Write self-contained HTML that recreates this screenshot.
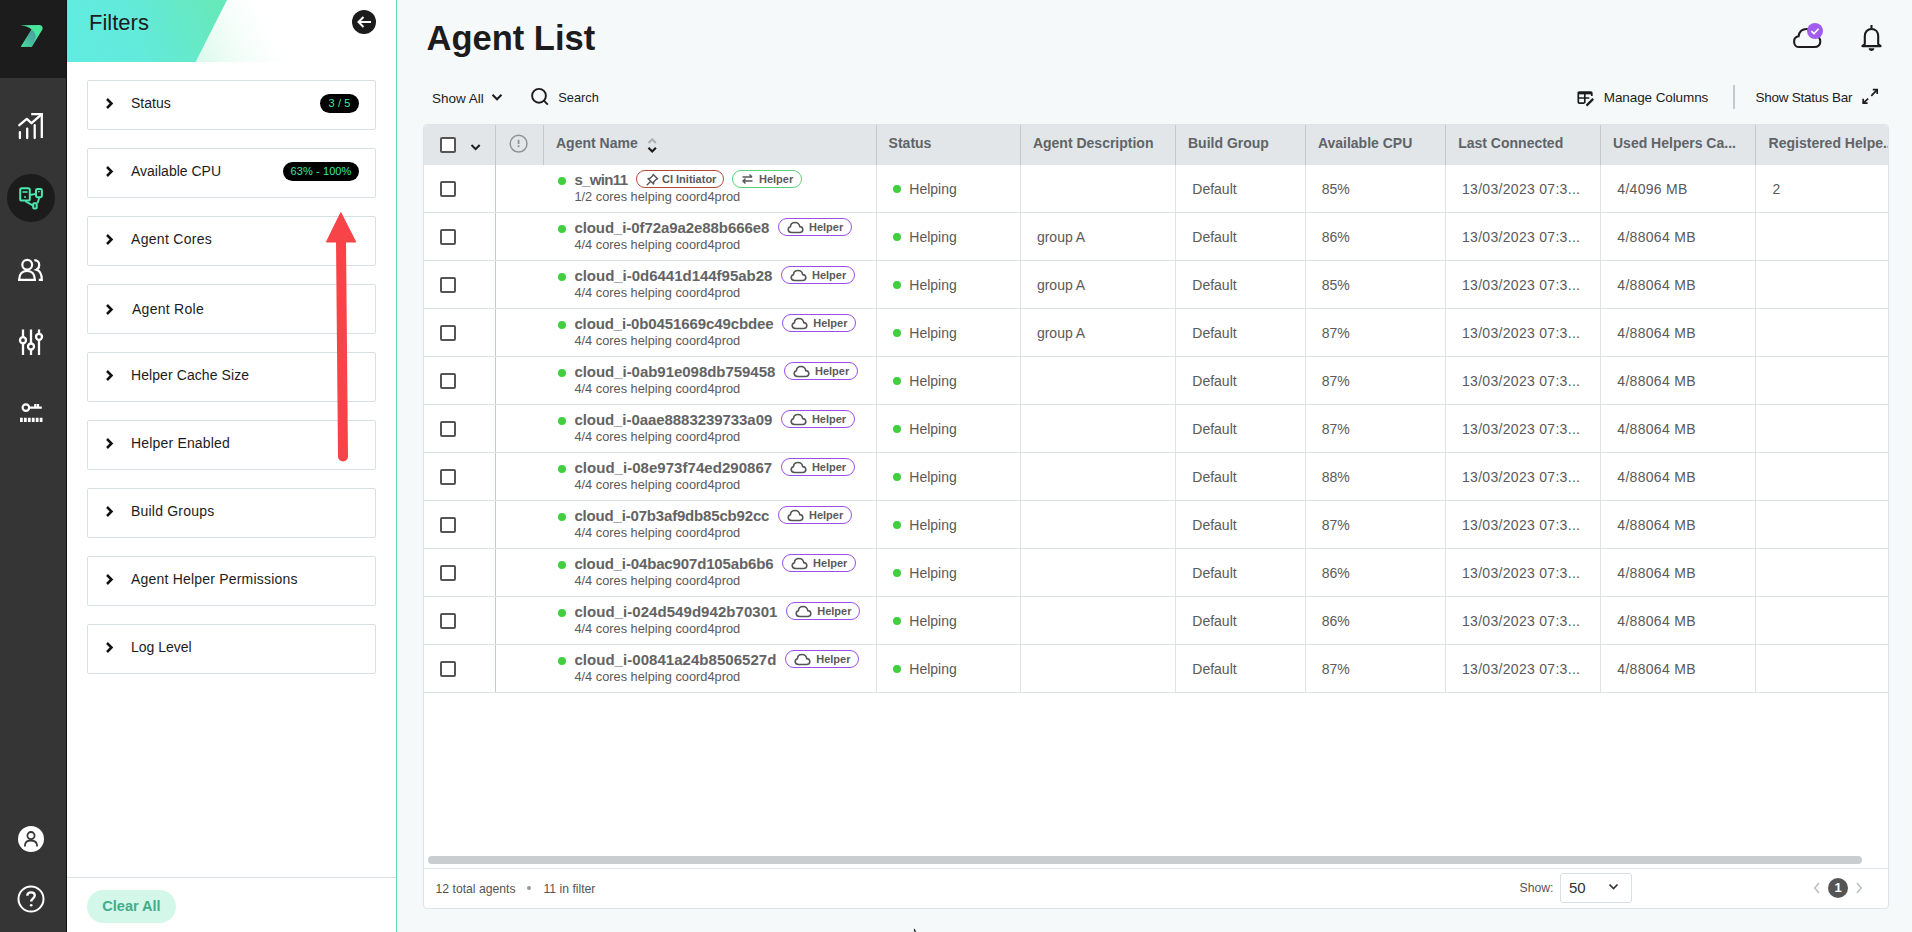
<!DOCTYPE html>
<html><head><meta charset="utf-8">
<style>
*{box-sizing:border-box;margin:0;padding:0}
html,body{width:1912px;height:932px;overflow:hidden}
body{font-family:"Liberation Sans",sans-serif;background:#f5f9fa;position:relative;color:#1c1c1c}
.abs{position:absolute}
svg{display:block}
#side{left:0;top:0;width:67px;height:932px;background:#353535;border-right:1px solid #121212}
#side .top{left:0;top:0;width:66px;height:78px;background:#1c1c1c}
#fp{left:67px;top:0;width:330px;height:932px;background:#fff;border-right:1px solid #62dfa9}
.fbox{position:absolute;left:20px;width:289px;height:50px;border:1px solid #d9e0e4;border-radius:2px;background:#fff}
.fbox .chev{position:absolute;left:17px;top:16px}
.fbox .lbl{position:absolute;left:43px;top:13px;font-size:14px;color:#1c1c1c;line-height:18px}
.badge{position:absolute;right:16px;top:13px;height:19px;border-radius:10px;background:#000;color:#3ee6a4;font-size:11px;line-height:19px;text-align:center;letter-spacing:0.1px}
.tb{top:89px;font-size:13.5px;line-height:18px;color:#1c1c1c}
#tbl{left:423px;top:124px;width:1466px;height:785px;background:#fff;border:1px solid #dde3e6;border-radius:4px;overflow:hidden}
.thead{left:0;top:0;width:1464px;height:40px;background:#e2e6e9}
.hdiv{top:0;width:1px;height:40px;background:#c2c9cd}
.bdiv{top:40px;width:1px;height:528px;background:#dfe3e6}
.hlbl{top:9.5px;font-size:14px;font-weight:bold;line-height:16px;color:#606467;white-space:nowrap}
.cb{width:16px;height:16px;border:2px solid #555;border-radius:2px;background:#fff}
.row{left:0;width:1464px;height:48px;border-bottom:1px solid #dde2e5}
.gdot{width:8px;height:8px;border-radius:50%;background:#3fcf3f}
.nm{top:5.8px;font-size:15px;font-weight:bold;line-height:18px;color:#636363;white-space:nowrap}
.sub{top:24.4px;font-size:12.8px;line-height:16px;color:#5a5a5a;white-space:nowrap}
.bdg{top:5px;height:18px;border:1.5px solid;border-radius:9px;background:#fff}
.bdg .bi{position:absolute;left:8px;top:1.5px}
.bdg span{position:absolute;top:1.5px;font-size:11px;font-weight:bold;line-height:13px;color:#5a5a5a;white-space:nowrap}
.cell{top:14.8px;font-size:14px;line-height:18px;color:#5a5a5a;white-space:nowrap}
.num{letter-spacing:0.3px}
.ft{top:756px;font-size:12.2px;line-height:16px;color:#555;white-space:nowrap}

</style></head><body>
<div id="side" class="abs">
  <div class="top abs"></div>
  <svg class="abs" style="left:0;top:0" width="66" height="78" viewBox="0 0 66 78">
    <defs>
      <linearGradient id="lg1" x1="0" y1="1" x2="1" y2="0">
        <stop offset="0" stop-color="#45e6a0"/><stop offset="0.55" stop-color="#4aa8a0"/><stop offset="1" stop-color="#4a8fa5"/>
      </linearGradient>
    </defs>
    <path d="M20.2 25.2 L39.5 24.9 Q43.5 25.5 42.4 29.5 L31.8 46.8 L20.9 46.8 L31.6 29.6 Q27 25.6 20.2 25.2 Z" fill="#48e59c"/>
    <path d="M31.6 29.6 Q36 33 35.8 37.6 L31.8 46.8 L20.9 46.8 Z" fill="url(#lg1)" opacity="0.85"/>
  </svg>
  <!-- chart icon -->
  <svg class="abs" style="left:17px;top:111px" width="28" height="29" viewBox="0 0 28 29" fill="none" stroke="#fff" stroke-width="2.3">
    <path d="M2.9 27 V21.2 M10.2 27 V17.6 M17.7 27 V14.2" stroke-linecap="round"/>
    <path d="M2.3 14.2 L9.8 7.9 L14.5 12.2 L24 3.8" stroke-linecap="round" stroke-linejoin="round"/>
    <path d="M14.2 3.2 H24.8 V27" stroke-linejoin="miter"/>
  </svg>
  <!-- active circle -->
  <div class="abs" style="left:7px;top:174px;width:48px;height:48px;border-radius:50%;background:#1c1c1c"></div>
  <svg class="abs" style="left:17px;top:186px" width="28" height="26" viewBox="0 0 28 26" fill="none" stroke="#4ce8b0" stroke-width="2" stroke-linejoin="round">
    <rect x="3.2" y="2.2" width="9.6" height="12.4" rx="1.6"/>
    <rect x="19" y="3" width="5.9" height="8.2" rx="1.4"/>
    <rect x="16.2" y="17.3" width="3.5" height="5.2" rx="1"/>
    <path d="M5.4 6 H10.6" stroke-width="1.6"/>
    <circle cx="8" cy="11" r="1" fill="#4ce8b0" stroke="none"/>
    <circle cx="21.9" cy="5.6" r="0.9" fill="#4ce8b0" stroke="none"/>
    <path d="M12.8 9 L19 7.9 M8.3 15.2 L16.2 19.6 M22.4 11.2 L20.5 17.3" stroke-width="1.8"/>
  </svg>
  <!-- users icon -->
  <svg class="abs" style="left:16px;top:257px" width="30" height="26" viewBox="0 0 30 26" fill="none" stroke="#fff" stroke-width="2.2">
    <circle cx="11.2" cy="7.8" r="4.9"/>
    <path d="M3.1 22.8 C3.1 16.8 6.5 13.8 11 13.8 C15.5 13.8 18.9 16.8 18.9 22.8 Z"/>
    <path d="M18.3 3.1 C21.5 3.1 23.2 5.3 23.2 7.8 C23.2 10.3 21.8 12.2 20.5 12.8 C24 13.8 25.8 17.5 25.8 22.8 H22.8"/>
  </svg>
  <!-- sliders -->
  <svg class="abs" style="left:17px;top:327px" width="28" height="30" viewBox="0 0 28 30" fill="none" stroke="#fff" stroke-width="2.3">
    <path d="M6 2.4 V10.2 M6 16.2 V28 M14 2.4 V16.5 M14 22.5 V28 M22 2.4 V6.8 M22 12.8 V28"/>
    <circle cx="6" cy="13.2" r="3"/><circle cx="14" cy="19.5" r="3"/><circle cx="22" cy="9.8" r="3"/>
  </svg>
  <!-- key -->
  <svg class="abs" style="left:18px;top:401px" width="28" height="24" viewBox="0 0 28 24" fill="none" stroke="#fff" stroke-width="2.2">
    <circle cx="7.9" cy="6.6" r="3.3"/>
    <path d="M11.2 6.6 H23.8 M17.3 6.6 V3 M20 6.6 V3" />
    <path d="M2 18.8 H24.6" stroke-dasharray="2.8 1.14" stroke-width="4.2"/>
  </svg>
  <!-- user -->
  <div class="abs" style="left:18px;top:826px;width:26px;height:26px;border-radius:50%;background:#fff"></div>
  <svg class="abs" style="left:18px;top:826px" width="26" height="26" viewBox="0 0 26 26" fill="none" stroke="#353535" stroke-width="1.8">
    <circle cx="13" cy="9.6" r="3.6"/>
    <path d="M6.8 20.5 C6.8 15.8 9.3 14.5 13 14.5 C16.7 14.5 19.2 15.8 19.2 20.5"/>
  </svg>
  <!-- help -->
  <svg class="abs" style="left:17px;top:885px" width="28" height="28" viewBox="0 0 28 28" fill="none" stroke="#fff" stroke-width="2">
    <circle cx="14" cy="14" r="12.5"/>
    <path d="M10.3 10.8 C10.3 8.5 12 7.3 14 7.3 C16.2 7.3 17.8 8.6 17.8 10.6 C17.8 13.2 14.2 13.5 14.2 16.5" stroke-width="2.3"/>
    <circle cx="14.2" cy="20.3" r="1.3" fill="#fff" stroke="none"/>
  </svg>
</div>

<div id="fp" class="abs">
  <svg class="abs" style="left:0;top:0" width="329" height="62" viewBox="0 0 329 62">
    <defs>
      <linearGradient id="hg1" x1="0" y1="62" x2="160" y2="0" gradientUnits="userSpaceOnUse">
        <stop offset="0" stop-color="#60ece2"/><stop offset="0.45" stop-color="#62eada"/><stop offset="1" stop-color="#68e8b6"/>
      </linearGradient>
      <linearGradient id="hg2" x1="128" y1="62" x2="200" y2="25" gradientUnits="userSpaceOnUse">
        <stop offset="0" stop-color="#d8faec"/><stop offset="0.45" stop-color="#effdf7"/><stop offset="1" stop-color="#ffffff"/>
      </linearGradient>
    </defs>
    <polygon points="128,62 160,0 329,0 329,62" fill="url(#hg2)"/>
    <polygon points="0,0 160,0 128.6,62 0,62" fill="url(#hg1)"/>
  </svg>
  <div class="abs" style="left:22px;top:10px;font-size:22px;line-height:26px;color:#1c1c1c">Filters</div>
  <div class="abs" style="left:285px;top:10px;width:24px;height:24px;border-radius:50%;background:#1c1c1c"></div>
  <svg class="abs" style="left:285px;top:10px" width="24" height="24" viewBox="0 0 24 24" fill="none" stroke="#fff" stroke-width="2">
    <path d="M19 12 H6.5 M11.5 7 L6.5 12 L11.5 17" stroke-linejoin="miter"/>
  </svg>
  <div class="fbox" style="top:80px"><svg class="chev" style="" width="9" height="13" viewBox="0 0 9 13"><path d="M2 2 L6.5 6.5 L2 11" fill="none" stroke="#111" stroke-width="2.5"/></svg><span class="lbl" style="letter-spacing:0px">Status</span><span class="badge" style="width:39px">3 / 5</span></div>
  <div class="fbox" style="top:148px"><svg class="chev" style="" width="9" height="13" viewBox="0 0 9 13"><path d="M2 2 L6.5 6.5 L2 11" fill="none" stroke="#111" stroke-width="2.5"/></svg><span class="lbl" style="letter-spacing:0px">Available CPU</span><span class="badge" style="width:76px">63% - 100%</span></div>
  <div class="fbox" style="top:216px"><svg class="chev" style="" width="9" height="13" viewBox="0 0 9 13"><path d="M2 2 L6.5 6.5 L2 11" fill="none" stroke="#111" stroke-width="2.5"/></svg><span class="lbl" style="letter-spacing:0.3px">Agent Cores</span></div>
  <div class="fbox" style="top:284px"><svg class="chev" style="top:17.6px" width="9" height="13" viewBox="0 0 9 13"><path d="M2 2 L6.5 6.5 L2 11" fill="none" stroke="#111" stroke-width="2.5"/></svg><span class="lbl" style="letter-spacing:0.27px;top:14.8px;left:44px">Agent Role</span></div>
  <div class="fbox" style="top:352px"><svg class="chev" style="" width="9" height="13" viewBox="0 0 9 13"><path d="M2 2 L6.5 6.5 L2 11" fill="none" stroke="#111" stroke-width="2.5"/></svg><span class="lbl" style="letter-spacing:0.08px">Helper Cache Size</span></div>
  <div class="fbox" style="top:420px"><svg class="chev" style="" width="9" height="13" viewBox="0 0 9 13"><path d="M2 2 L6.5 6.5 L2 11" fill="none" stroke="#111" stroke-width="2.5"/></svg><span class="lbl" style="letter-spacing:0.18px">Helper Enabled</span></div>
  <div class="fbox" style="top:488px"><svg class="chev" style="" width="9" height="13" viewBox="0 0 9 13"><path d="M2 2 L6.5 6.5 L2 11" fill="none" stroke="#111" stroke-width="2.5"/></svg><span class="lbl" style="letter-spacing:0.2px">Build Groups</span></div>
  <div class="fbox" style="top:556px"><svg class="chev" style="" width="9" height="13" viewBox="0 0 9 13"><path d="M2 2 L6.5 6.5 L2 11" fill="none" stroke="#111" stroke-width="2.5"/></svg><span class="lbl" style="letter-spacing:0.2px">Agent Helper Permissions</span></div>
  <div class="fbox" style="top:624px"><svg class="chev" style="" width="9" height="13" viewBox="0 0 9 13"><path d="M2 2 L6.5 6.5 L2 11" fill="none" stroke="#111" stroke-width="2.5"/></svg><span class="lbl" style="letter-spacing:0px">Log Level</span></div>
  <div class="abs" style="left:0;top:877px;width:329px;height:1px;background:#d9e0e4"></div>
  <div class="abs" style="left:20px;top:890px;width:89px;height:33px;border-radius:17px;background:#d3f7e9;color:#41ad89;font-size:14.5px;font-weight:bold;line-height:33px;text-align:center">Clear All</div>
</div>

<div class="abs" style="left:426.5px;top:18px;font-size:34.5px;font-weight:bold;line-height:40px;letter-spacing:0px;color:#1c1c1c">Agent List</div>
<!-- cloud -->
<svg class="abs" style="left:1790px;top:20px" width="40" height="32" viewBox="0 0 40 32" fill="none">
  <path d="M8.3 27 H24.3 C28 27 30.3 24.8 30.3 21.5 C30.3 18.4 28 16 24.8 15.8 C24 11.2 20.6 9 16.8 9 C12.2 9 9.2 12 8.6 16.2 C5.8 16.6 4.1 18.8 4.1 21.5 C4.1 24.6 6 27 8.3 27 Z" stroke="#1c1c1c" stroke-width="2.1"/>
  <circle cx="25" cy="11" r="8" fill="#a35cf0"/>
  <path d="M21.3 11.2 L24 13.6 L28.6 8.8" stroke="#fff" stroke-width="1.6"/>
</svg>
<!-- bell -->
<svg class="abs" style="left:1858px;top:23px" width="27" height="31" viewBox="0 0 27 31" fill="none" stroke="#1c1c1c" stroke-width="2.1">
  <path d="M13.5 2 V5.5"/>
  <path d="M6.8 20.9 V13.2 C6.8 8.9 9.6 6 13.5 6 C17.4 6 20.2 8.9 20.2 13.2 V20.9 L22.6 23.1 H4.4 L6.8 20.9 Z" stroke-linejoin="round"/>
  <path d="M10.6 25.3 H16.4 C16.2 27.1 15 28.1 13.5 28.1 C12 28.1 10.8 27.1 10.6 25.3 Z" fill="#1c1c1c" stroke="none"/>
</svg>
<!-- toolbar -->
<div class="abs tb" style="left:432px;top:90px">Show All</div>
<svg class="abs" style="left:491px;top:93px" width="12" height="9" viewBox="0 0 12 9"><path d="M1.5 1.8 L6 6.3 L10.5 1.8" fill="none" stroke="#1c1c1c" stroke-width="2"/></svg>
<svg class="abs" style="left:530px;top:87px" width="20" height="20" viewBox="0 0 20 20" fill="none" stroke="#1c1c1c" stroke-width="1.9"><circle cx="9" cy="8.8" r="6.9"/><path d="M13.9 13.7 L17.8 17.6"/></svg>
<div class="abs tb" style="left:558.3px;font-size:12.8px;top:89px">Search</div>
<svg class="abs" style="left:1576px;top:89px" width="20" height="19" viewBox="0 0 20 19" fill="none" stroke="#1c1c1c" stroke-width="1.7">
  <path d="M15.8 7 V4.1 C15.8 3.5 15.5 3.1 14.8 3.1 H3.3 C2.7 3.1 2.3 3.5 2.3 4.1 V13.1 C2.3 13.7 2.7 14.1 3.3 14.1 H8.6"/>
  <path d="M2.5 4.2 H15.6" stroke-width="2.3"/>
  <path d="M2.3 9 H13.3 M8.8 3.1 V14.1"/>
  <path d="M10.5 16.6 L17.2 9.9" stroke-width="2.2"/>
</svg>
<div class="abs tb" style="left:1603.8px;letter-spacing:-0.1px">Manage Columns</div>
<div class="abs" style="left:1733px;top:85px;width:2px;height:24px;background:#c4c9cc"></div>
<div class="abs tb" style="left:1755.4px;letter-spacing:-0.25px">Show Status Bar</div>
<svg class="abs" style="left:1860px;top:87px" width="20" height="20" viewBox="0 0 20 20" fill="none" stroke="#1c1c1c" stroke-width="1.7">
  <path d="M17.2 2.6 L11.3 8.8 M8.2 11.6 L3.2 16.2"/>
  <path d="M12.8 2.6 H17.2 V7 M3.2 11.8 V16.2 H7.6"/>
</svg>
<!-- red arrow -->
<svg class="abs" style="left:320px;top:205px" width="45" height="265" viewBox="0 0 45 265">
  <path d="M21 35 L23 251.5" stroke="#f84348" stroke-width="10" stroke-linecap="round"/>
  <polygon points="20.8,7.6 6.4,37 35.8,37" fill="#f84348" stroke="#f84348" stroke-width="1" stroke-linejoin="round"/>
</svg>
<!-- cursor -->
<svg class="abs" style="left:912px;top:926px" width="10" height="6" viewBox="0 0 10 6"><path d="M1.5 1 L1.5 6 L5 6 Z" fill="#111" stroke="#fff" stroke-width="0.8"/></svg>

<div id="tbl" class="abs">
<div class="thead abs"></div>
<div class="abs hdiv" style="left:71px"></div>
<div class="abs hdiv" style="left:119px"></div>
<div class="abs hdiv" style="left:452px"></div>
<div class="abs hdiv" style="left:596px"></div>
<div class="abs hdiv" style="left:751px"></div>
<div class="abs hdiv" style="left:881px"></div>
<div class="abs hdiv" style="left:1021px"></div>
<div class="abs hdiv" style="left:1176px"></div>
<div class="abs hdiv" style="left:1331px"></div>
<div class="abs hlbl" style="left:132.0px">Agent Name</div>
<div class="abs hlbl" style="left:464.6px">Status</div>
<div class="abs hlbl" style="left:608.9px">Agent Description</div>
<div class="abs hlbl" style="left:764.0px">Build Group</div>
<div class="abs hlbl" style="left:893.9px">Available CPU</div>
<div class="abs hlbl" style="left:1034.2px">Last Connected</div>
<div class="abs hlbl" style="left:1189.0px">Used Helpers Ca...</div>
<div class="abs hlbl" style="left:1344.6px">Registered Helpe..</div>
<div class="abs cb" style="left:16px;top:12px"></div>
<svg class="abs" style="left:46px;top:17.5px" width="12" height="9" viewBox="0 0 12 9"><path d="M1.5 2 L5.6 6.1 L9.7 2" fill="none" stroke="#1c1c1c" stroke-width="2"/></svg>
<svg class="abs" style="left:85px;top:9px" width="20" height="20" viewBox="0 0 20 20" fill="none" stroke="#8e9397" stroke-width="1.5"><circle cx="9.6" cy="9.7" r="8.4"/><rect x="8.7" y="5.8" width="1.8" height="4.2" fill="#8e9397" stroke="none"/><rect x="8.7" y="11.3" width="1.8" height="1.8" fill="#8e9397" stroke="none"/></svg>
<svg class="abs" style="left:222.5px;top:12px" width="11" height="18" viewBox="0 0 11 18" fill="none" stroke-width="1.9"><path d="M1.5 6 L5.2 2.3 L8.9 6" stroke="#a8adb0"/><path d="M1.5 10.8 L5.2 14.5 L8.9 10.8" stroke="#1c1c1c" stroke-width="2.2"/></svg>
<div class="abs bdiv" style="left:71px;background:#c3c9cd"></div>
<div class="abs bdiv" style="left:452px;"></div>
<div class="abs bdiv" style="left:596px;"></div>
<div class="abs bdiv" style="left:751px;"></div>
<div class="abs bdiv" style="left:881px;"></div>
<div class="abs bdiv" style="left:1021px;"></div>
<div class="abs bdiv" style="left:1176px;"></div>
<div class="abs bdiv" style="left:1331px;"></div>
<div class="row abs" style="top:40px"><div class="abs cb" style="left:16px;top:16px"></div><div class="abs gdot" style="left:133.8px;top:12px"></div><div class="abs nm" style="left:150.4px;letter-spacing:-0.657px">s_win11</div><div class="abs sub" style="left:150.4px">1/2 cores helping coord4prod</div><div class="abs bdg" style="left:212.0px;width:88px;border-color:#b5493a"><svg class="bi" width="14" height="14" viewBox="0 0 14 14" fill="none" stroke="#555" stroke-width="1.4" stroke-linejoin="round"><path d="M8.2 1.5 L12.5 5.8 L11.3 6.3 L8.8 8.8 L8.6 11 L3 5.4 L5.2 5.2 L7.7 2.7 Z M5.5 8.5 L1.8 12.2"/></svg><span style="left:25px">CI Initiator</span></div><div class="abs bdg" style="left:308.0px;width:70px;border-color:#55d47a"><svg class="bi" width="13" height="12" viewBox="0 0 13 12" fill="none" stroke="#555" stroke-width="1.4"><path d="M1.5 4 H11 M8.5 1.5 L11 4 M11.5 8 H2 M4.5 5.5 L2 8 L4.5 10.5"/></svg><span style="left:26px">Helper</span></div><div class="abs gdot" style="left:469px;top:20px"></div><div class="abs cell" style="left:485.3px">Helping</div><div class="abs cell" style="left:768.3px">Default</div><div class="abs cell" style="left:897.8px">85%</div><div class="abs cell num" style="left:1038px">13/03/2023 07:3...</div><div class="abs cell num" style="left:1193.3px">4/4096 MB</div><div class="abs cell" style="left:1348.6px">2</div></div>
<div class="row abs" style="top:88px"><div class="abs cb" style="left:16px;top:16px"></div><div class="abs gdot" style="left:133.8px;top:12px"></div><div class="abs nm" style="left:150.4px;letter-spacing:-0.076px">cloud_i-0f72a9a2e88b666e8</div><div class="abs sub" style="left:150.4px">4/4 cores helping coord4prod</div><div class="abs bdg" style="left:354.0px;width:74px;border-color:#9a4ee8"><svg class="bi" width="17" height="13" viewBox="0 0 17 13" fill="none" stroke="#555" stroke-width="1.6"><path d="M4.5 11.5 H12.5 C14.5 11.5 15.8 10.2 15.8 8.5 C15.8 6.8 14.5 5.6 12.8 5.6 C12.3 3 10.3 1.5 8 1.5 C5.5 1.5 3.6 3.3 3.4 5.7 C2 6 1.2 7.2 1.2 8.6 C1.2 10.3 2.6 11.5 4.5 11.5 Z"/></svg><span style="left:30px">Helper</span></div><div class="abs gdot" style="left:469px;top:20px"></div><div class="abs cell" style="left:485.3px">Helping</div><div class="abs cell" style="left:612.9px">group A</div><div class="abs cell" style="left:768.3px">Default</div><div class="abs cell" style="left:897.8px">86%</div><div class="abs cell num" style="left:1038px">13/03/2023 07:3...</div><div class="abs cell num" style="left:1193.3px">4/88064 MB</div></div>
<div class="row abs" style="top:136px"><div class="abs cb" style="left:16px;top:16px"></div><div class="abs gdot" style="left:133.8px;top:12px"></div><div class="abs nm" style="left:150.4px;letter-spacing:-0.020px">cloud_i-0d6441d144f95ab28</div><div class="abs sub" style="left:150.4px">4/4 cores helping coord4prod</div><div class="abs bdg" style="left:357.0px;width:74px;border-color:#9a4ee8"><svg class="bi" width="17" height="13" viewBox="0 0 17 13" fill="none" stroke="#555" stroke-width="1.6"><path d="M4.5 11.5 H12.5 C14.5 11.5 15.8 10.2 15.8 8.5 C15.8 6.8 14.5 5.6 12.8 5.6 C12.3 3 10.3 1.5 8 1.5 C5.5 1.5 3.6 3.3 3.4 5.7 C2 6 1.2 7.2 1.2 8.6 C1.2 10.3 2.6 11.5 4.5 11.5 Z"/></svg><span style="left:30px">Helper</span></div><div class="abs gdot" style="left:469px;top:20px"></div><div class="abs cell" style="left:485.3px">Helping</div><div class="abs cell" style="left:612.9px">group A</div><div class="abs cell" style="left:768.3px">Default</div><div class="abs cell" style="left:897.8px">85%</div><div class="abs cell num" style="left:1038px">13/03/2023 07:3...</div><div class="abs cell num" style="left:1193.3px">4/88064 MB</div></div>
<div class="row abs" style="top:184px"><div class="abs cb" style="left:16px;top:16px"></div><div class="abs gdot" style="left:133.8px;top:12px"></div><div class="abs nm" style="left:150.4px;letter-spacing:-0.108px">cloud_i-0b0451669c49cbdee</div><div class="abs sub" style="left:150.4px">4/4 cores helping coord4prod</div><div class="abs bdg" style="left:358.2px;width:74px;border-color:#9a4ee8"><svg class="bi" width="17" height="13" viewBox="0 0 17 13" fill="none" stroke="#555" stroke-width="1.6"><path d="M4.5 11.5 H12.5 C14.5 11.5 15.8 10.2 15.8 8.5 C15.8 6.8 14.5 5.6 12.8 5.6 C12.3 3 10.3 1.5 8 1.5 C5.5 1.5 3.6 3.3 3.4 5.7 C2 6 1.2 7.2 1.2 8.6 C1.2 10.3 2.6 11.5 4.5 11.5 Z"/></svg><span style="left:30px">Helper</span></div><div class="abs gdot" style="left:469px;top:20px"></div><div class="abs cell" style="left:485.3px">Helping</div><div class="abs cell" style="left:612.9px">group A</div><div class="abs cell" style="left:768.3px">Default</div><div class="abs cell" style="left:897.8px">87%</div><div class="abs cell num" style="left:1038px">13/03/2023 07:3...</div><div class="abs cell num" style="left:1193.3px">4/88064 MB</div></div>
<div class="row abs" style="top:232px"><div class="abs cb" style="left:16px;top:16px"></div><div class="abs gdot" style="left:133.8px;top:12px"></div><div class="abs nm" style="left:150.4px;letter-spacing:-0.036px">cloud_i-0ab91e098db759458</div><div class="abs sub" style="left:150.4px">4/4 cores helping coord4prod</div><div class="abs bdg" style="left:360.0px;width:74px;border-color:#9a4ee8"><svg class="bi" width="17" height="13" viewBox="0 0 17 13" fill="none" stroke="#555" stroke-width="1.6"><path d="M4.5 11.5 H12.5 C14.5 11.5 15.8 10.2 15.8 8.5 C15.8 6.8 14.5 5.6 12.8 5.6 C12.3 3 10.3 1.5 8 1.5 C5.5 1.5 3.6 3.3 3.4 5.7 C2 6 1.2 7.2 1.2 8.6 C1.2 10.3 2.6 11.5 4.5 11.5 Z"/></svg><span style="left:30px">Helper</span></div><div class="abs gdot" style="left:469px;top:20px"></div><div class="abs cell" style="left:485.3px">Helping</div><div class="abs cell" style="left:768.3px">Default</div><div class="abs cell" style="left:897.8px">87%</div><div class="abs cell num" style="left:1038px">13/03/2023 07:3...</div><div class="abs cell num" style="left:1193.3px">4/88064 MB</div></div>
<div class="row abs" style="top:280px"><div class="abs cb" style="left:16px;top:16px"></div><div class="abs gdot" style="left:133.8px;top:12px"></div><div class="abs nm" style="left:150.4px;letter-spacing:-0.060px">cloud_i-0aae8883239733a09</div><div class="abs sub" style="left:150.4px">4/4 cores helping coord4prod</div><div class="abs bdg" style="left:356.9px;width:74px;border-color:#9a4ee8"><svg class="bi" width="17" height="13" viewBox="0 0 17 13" fill="none" stroke="#555" stroke-width="1.6"><path d="M4.5 11.5 H12.5 C14.5 11.5 15.8 10.2 15.8 8.5 C15.8 6.8 14.5 5.6 12.8 5.6 C12.3 3 10.3 1.5 8 1.5 C5.5 1.5 3.6 3.3 3.4 5.7 C2 6 1.2 7.2 1.2 8.6 C1.2 10.3 2.6 11.5 4.5 11.5 Z"/></svg><span style="left:30px">Helper</span></div><div class="abs gdot" style="left:469px;top:20px"></div><div class="abs cell" style="left:485.3px">Helping</div><div class="abs cell" style="left:768.3px">Default</div><div class="abs cell" style="left:897.8px">87%</div><div class="abs cell num" style="left:1038px">13/03/2023 07:3...</div><div class="abs cell num" style="left:1193.3px">4/88064 MB</div></div>
<div class="row abs" style="top:328px"><div class="abs cb" style="left:16px;top:16px"></div><div class="abs gdot" style="left:133.8px;top:12px"></div><div class="abs nm" style="left:150.4px;letter-spacing:0.040px">cloud_i-08e973f74ed290867</div><div class="abs sub" style="left:150.4px">4/4 cores helping coord4prod</div><div class="abs bdg" style="left:356.9px;width:74px;border-color:#9a4ee8"><svg class="bi" width="17" height="13" viewBox="0 0 17 13" fill="none" stroke="#555" stroke-width="1.6"><path d="M4.5 11.5 H12.5 C14.5 11.5 15.8 10.2 15.8 8.5 C15.8 6.8 14.5 5.6 12.8 5.6 C12.3 3 10.3 1.5 8 1.5 C5.5 1.5 3.6 3.3 3.4 5.7 C2 6 1.2 7.2 1.2 8.6 C1.2 10.3 2.6 11.5 4.5 11.5 Z"/></svg><span style="left:30px">Helper</span></div><div class="abs gdot" style="left:469px;top:20px"></div><div class="abs cell" style="left:485.3px">Helping</div><div class="abs cell" style="left:768.3px">Default</div><div class="abs cell" style="left:897.8px">88%</div><div class="abs cell num" style="left:1038px">13/03/2023 07:3...</div><div class="abs cell num" style="left:1193.3px">4/88064 MB</div></div>
<div class="row abs" style="top:376px"><div class="abs cb" style="left:16px;top:16px"></div><div class="abs gdot" style="left:133.8px;top:12px"></div><div class="abs nm" style="left:150.4px;letter-spacing:-0.176px">cloud_i-07b3af9db85cb92cc</div><div class="abs sub" style="left:150.4px">4/4 cores helping coord4prod</div><div class="abs bdg" style="left:354.0px;width:74px;border-color:#9a4ee8"><svg class="bi" width="17" height="13" viewBox="0 0 17 13" fill="none" stroke="#555" stroke-width="1.6"><path d="M4.5 11.5 H12.5 C14.5 11.5 15.8 10.2 15.8 8.5 C15.8 6.8 14.5 5.6 12.8 5.6 C12.3 3 10.3 1.5 8 1.5 C5.5 1.5 3.6 3.3 3.4 5.7 C2 6 1.2 7.2 1.2 8.6 C1.2 10.3 2.6 11.5 4.5 11.5 Z"/></svg><span style="left:30px">Helper</span></div><div class="abs gdot" style="left:469px;top:20px"></div><div class="abs cell" style="left:485.3px">Helping</div><div class="abs cell" style="left:768.3px">Default</div><div class="abs cell" style="left:897.8px">87%</div><div class="abs cell num" style="left:1038px">13/03/2023 07:3...</div><div class="abs cell num" style="left:1193.3px">4/88064 MB</div></div>
<div class="row abs" style="top:424px"><div class="abs cb" style="left:16px;top:16px"></div><div class="abs gdot" style="left:133.8px;top:12px"></div><div class="abs nm" style="left:150.4px;letter-spacing:-0.144px">cloud_i-04bac907d105ab6b6</div><div class="abs sub" style="left:150.4px">4/4 cores helping coord4prod</div><div class="abs bdg" style="left:358.1px;width:74px;border-color:#9a4ee8"><svg class="bi" width="17" height="13" viewBox="0 0 17 13" fill="none" stroke="#555" stroke-width="1.6"><path d="M4.5 11.5 H12.5 C14.5 11.5 15.8 10.2 15.8 8.5 C15.8 6.8 14.5 5.6 12.8 5.6 C12.3 3 10.3 1.5 8 1.5 C5.5 1.5 3.6 3.3 3.4 5.7 C2 6 1.2 7.2 1.2 8.6 C1.2 10.3 2.6 11.5 4.5 11.5 Z"/></svg><span style="left:30px">Helper</span></div><div class="abs gdot" style="left:469px;top:20px"></div><div class="abs cell" style="left:485.3px">Helping</div><div class="abs cell" style="left:768.3px">Default</div><div class="abs cell" style="left:897.8px">86%</div><div class="abs cell num" style="left:1038px">13/03/2023 07:3...</div><div class="abs cell num" style="left:1193.3px">4/88064 MB</div></div>
<div class="row abs" style="top:472px"><div class="abs cb" style="left:16px;top:16px"></div><div class="abs gdot" style="left:133.8px;top:12px"></div><div class="abs nm" style="left:150.4px;letter-spacing:0.052px">cloud_i-024d549d942b70301</div><div class="abs sub" style="left:150.4px">4/4 cores helping coord4prod</div><div class="abs bdg" style="left:362.2px;width:74px;border-color:#9a4ee8"><svg class="bi" width="17" height="13" viewBox="0 0 17 13" fill="none" stroke="#555" stroke-width="1.6"><path d="M4.5 11.5 H12.5 C14.5 11.5 15.8 10.2 15.8 8.5 C15.8 6.8 14.5 5.6 12.8 5.6 C12.3 3 10.3 1.5 8 1.5 C5.5 1.5 3.6 3.3 3.4 5.7 C2 6 1.2 7.2 1.2 8.6 C1.2 10.3 2.6 11.5 4.5 11.5 Z"/></svg><span style="left:30px">Helper</span></div><div class="abs gdot" style="left:469px;top:20px"></div><div class="abs cell" style="left:485.3px">Helping</div><div class="abs cell" style="left:768.3px">Default</div><div class="abs cell" style="left:897.8px">86%</div><div class="abs cell num" style="left:1038px">13/03/2023 07:3...</div><div class="abs cell num" style="left:1193.3px">4/88064 MB</div></div>
<div class="row abs" style="top:520px"><div class="abs cb" style="left:16px;top:16px"></div><div class="abs gdot" style="left:133.8px;top:12px"></div><div class="abs nm" style="left:150.4px;letter-spacing:0.044px">cloud_i-00841a24b8506527d</div><div class="abs sub" style="left:150.4px">4/4 cores helping coord4prod</div><div class="abs bdg" style="left:361.2px;width:74px;border-color:#9a4ee8"><svg class="bi" width="17" height="13" viewBox="0 0 17 13" fill="none" stroke="#555" stroke-width="1.6"><path d="M4.5 11.5 H12.5 C14.5 11.5 15.8 10.2 15.8 8.5 C15.8 6.8 14.5 5.6 12.8 5.6 C12.3 3 10.3 1.5 8 1.5 C5.5 1.5 3.6 3.3 3.4 5.7 C2 6 1.2 7.2 1.2 8.6 C1.2 10.3 2.6 11.5 4.5 11.5 Z"/></svg><span style="left:30px">Helper</span></div><div class="abs gdot" style="left:469px;top:20px"></div><div class="abs cell" style="left:485.3px">Helping</div><div class="abs cell" style="left:768.3px">Default</div><div class="abs cell" style="left:897.8px">87%</div><div class="abs cell num" style="left:1038px">13/03/2023 07:3...</div><div class="abs cell num" style="left:1193.3px">4/88064 MB</div></div>
<div class="abs" style="left:4px;top:730.5px;width:1434px;height:8.5px;border-radius:5px;background:#c9cdcf"></div>
<div class="abs" style="left:0;top:742.5px;width:1464px;height:1px;background:#dde3e6"></div>
<div class="abs ft" style="left:11.6px">12 total agents</div>
<div class="abs" style="left:103px;top:761px;width:4px;height:4px;border-radius:50%;background:#999"></div>
<div class="abs ft" style="left:119.5px">11 in filter</div>
<div class="abs ft" style="left:1095.5px;top:755px">Show:</div>
<div class="abs" style="left:1136px;top:747.5px;width:72px;height:30px;border:1px solid #d9dfe3;border-radius:3px;background:#fff"></div>
<div class="abs" style="left:1145px;top:752.5px;font-size:15px;line-height:20px;color:#333">50</div>
<svg class="abs" style="left:1184px;top:758px" width="11" height="8" viewBox="0 0 11 8"><path d="M1.5 1.5 L5.5 5.5 L9.5 1.5" fill="none" stroke="#333" stroke-width="1.7"/></svg>
<svg class="abs" style="left:1389px;top:757px" width="8" height="12" viewBox="0 0 8 12"><path d="M6 1 L1.8 6 L6 11" fill="none" stroke="#b9bec2" stroke-width="1.5"/></svg>
<div class="abs" style="left:1404px;top:753px;width:20px;height:20px;border-radius:50%;background:#555;color:#fff;font-size:13px;line-height:20px;text-align:center;font-weight:bold">1</div>
<svg class="abs" style="left:1431px;top:757px" width="8" height="12" viewBox="0 0 8 12"><path d="M2 1 L6.2 6 L2 11" fill="none" stroke="#b9bec2" stroke-width="1.5"/></svg>
</div>
</body></html>
